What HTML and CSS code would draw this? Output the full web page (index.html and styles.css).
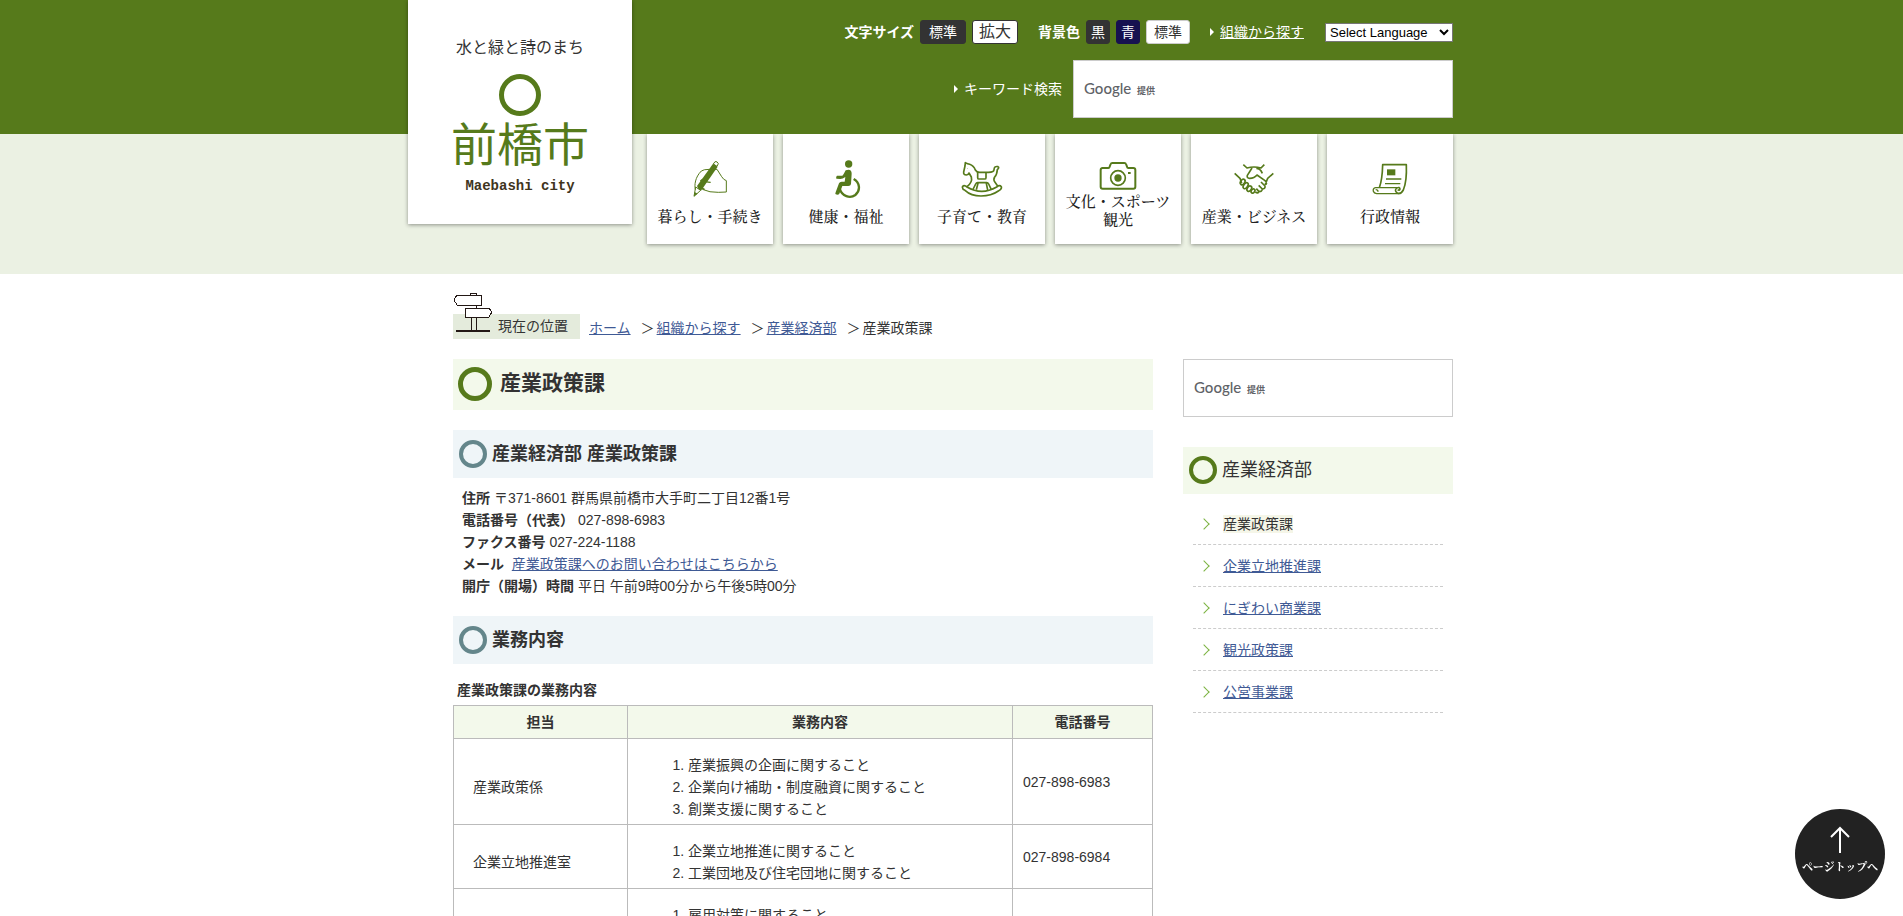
FILE: index.html
```html
<!DOCTYPE html>
<html lang="ja">
<head>
    <meta charset="UTF-8">
    <meta name="viewport" content="width=device-width, initial-scale=1.0">
    <title>産業政策課 - 前橋市</title>
    <link rel="stylesheet" href="styles.css">
</head>
<body>
    <header class="header">
        <div class="container header-inner">
            <a href="#" class="logo">
                <span class="logo-copy">水と緑と詩のまち</span>
                <span class="logo-ring"></span>
                <span class="logo-name">前橋市</span>
                <span class="logo-roman">Maebashi city</span>
            </a>
            <div class="header-right">
                <div class="tools">
                    <div class="tool-group">
                        <strong>文字サイズ</strong>
                        <button type="button" class="btn-dark">標準</button>
                        <button type="button" class="btn-large">拡大</button>
                    </div>
                    <div class="tool-group color-group">
                        <strong>背景色</strong>
                        <button type="button" class="btn-dark">黒</button>
                        <button type="button" class="btn-blue">青</button>
                        <button type="button" class="btn-white">標準</button>
                    </div>
                    <div class="arrow"><a href="#">組織から探す</a></div>
                    <select class="language" aria-label="Select Language">
                        <option>Select Language</option>
                    </select>
                </div>
                <form class="search-row">
                    <label for="keyword" class="arrow">キーワード検索</label>
                    <div class="search-box">
                        <input id="keyword" type="text">
                        <span class="brand">Google <small>提供</small></span>
                    </div>
                </form>
                <nav class="global-nav">
                    <a href="#">
                        <svg viewBox="0 0 126 120" fill="none">
                            <path d="M19 92C16 78 18 55 37 36q6-5 25-5M78 31h6l14 22q6 10 14 12v34l-24 1q-26 1-48-9" stroke-width="3"/>
                            <path d="M34 66l7-5q8 9 24 9M41 61l-8 14q4 14 14 16" stroke-width="4"/>
                            <path class="solid" d="M72 14l14 9-50 72-8-6-4-8z"/>
                            <path d="M78 8q7-2 10 6l-4 8-11-7z" stroke-width="3"/>
                            <path d="M20 84l-5 28 20-18z" stroke-width="3"/>
                            <path class="solid" d="M17 99l-2 13 11-8z"/>
                        </svg>
                        <span>暮らし・手続き</span>
                    </a>
                    <a href="#">
                        <svg viewBox="0 0 126 120" fill="none">
                            <circle class="solid" cx="71" cy="15" r="11"/>
                            <path class="solid" d="M62 34q18-6 18 10l-2 31q-1 6-8 6H52l-9 23q-4 6-12 1 0-2 1-5l10-27q2-5 8-5h9l2-14q-8 6-15 6l-12-1q-2-6 2-9h16q2 0 10-16z"/>
                            <path d="M86 60c18 10 22 34 5 48-16 12-40 4-47-19" stroke-width="7"/>
                        </svg>
                        <span>健康・福祉</span>
                    </a>
                    <a href="#">
                        <svg viewBox="0 0 126 120" fill="none" stroke-width="5">
                            <path d="M12 94Q2 90 5 82q5-5 13 2 44 26 89 0 9-7 14-1 2 8-9 13Q91 111 60 111q-30 0-48-17z"/>
                            <path d="M18 83q17-13 13-29l-7-12q-1 5-8 6-9 0-8-9l4-18 1-10q7 3 13 5 12 4 17 17 4 7 13 7h26q17-1 17-8 1-12 12-9 5 2-2 9-1 15-8 22-5 8 1 16l8 11"/>
                            <path d="M50 40v16q0 4 4 4h17q4 0 4-4V40M35 93l9-18q2-4 6-4h27q4 0 6 4l8 17M51 73l-5 19M76 73l4 20"/>
                            <circle class="solid" cx="19" cy="28" r="1"/>
                        </svg>
                        <span>子育て・教育</span>
                    </a>
                    <a href="#" class="two-lines">
                        <svg viewBox="0 0 126 120" fill="none" stroke-width="6">
                            <path d="M15 54h19q3 0 4-4l3-8q1-3 5-3h36q4 0 5 3l3 8q1 4 4 4h15q6 0 6 6v50q0 6-6 6H17q-6 0-6-6V60q0-6 6-6z"/>
                            <circle cx="63" cy="84" r="22" stroke-width="5"/>
                            <circle class="solid" cx="63" cy="84" r="11"/>
                            <path d="M93 69h8"/>
                        </svg>
                        <span>文化・スポーツ<br>観光</span>
                    </a>
                    <a href="#">
                        <svg viewBox="0 0 126 120" fill="none" stroke-width="5">
                            <path d="M31 17l11 10q21-6 42 0l10-10M57 27L43 49q-2 8 7 9 14 0 22-10l23 16q8 6 4 13M70 28q12 0 18 15M5 43l16 15 5 15M121 43l-17 15-8 20"/>
                            <ellipse cx="29" cy="69" rx="6" ry="9" transform="rotate(35 29 69)"/>
                            <ellipse cx="38" cy="80" rx="6" ry="10" transform="rotate(35 38 80)"/>
                            <ellipse cx="49" cy="89" rx="6" ry="9" transform="rotate(35 49 89)"/>
                            <ellipse cx="60" cy="96" rx="5" ry="7" transform="rotate(35 60 96)"/>
                            <path d="M67 99q8 6 11-1l-8-9M78 97q9 2 10-7L77 79M88 90q9 0 8-9L84 69"/>
                        </svg>
                        <span>産業・ビジネス</span>
                    </a>
                    <a href="#">
                        <svg viewBox="0 0 126 120" fill="none" stroke-width="5">
                            <path d="M31 86q9-25 10-69h71q2 49-9 76-8 14-18 9-10-7-2-15 9-4 10 3-2 6-7 2"/>
                            <path d="M84 86H20q-9 2-7 11 2 6 10 7h68M20 92q7 0 7 6" stroke-width="4"/>
                            <path class="solid" d="M54 31h25v18H54z"/>
                            <path d="M51 60h46M48 74h46" stroke-width="4"/>
                        </svg>
                        <span>行政情報</span>
                    </a>
                </nav>
            </div>
        </div>
    </header>

    <div class="container">
        <div class="breadcrumb">
            <div class="here">
                <svg class="signpost" viewBox="0 0 40 42" fill="#fff" stroke="#231815" shape-rendering="crispEdges">
                    <path d="M17 3V1h6v2M17 13h6v3M18 25v14M23 25v14"/>
                    <path d="M4 3h24v10H4L1 8zM12 16h24l3 4-3 5H12z"/>
                    <path d="M3 39h34" stroke-width="2"/>
                </svg>
                現在の位置
            </div>
            <ul>
                <li><a href="#">ホーム</a></li>
                <li><a href="#">組織から探す</a></li>
                <li><a href="#">産業経済部</a></li>
                <li>産業政策課</li>
            </ul>
        </div>

        <div class="columns">
            <main class="main">
                <h1>産業政策課</h1>
                <h2>産業経済部 産業政策課</h2>
                <div class="address">
                    <p><strong>住所</strong> 〒371-8601 群馬県前橋市大手町二丁目12番1号</p>
                    <p><strong>電話番号（代表）</strong> 027-898-6983</p>
                    <p><strong>ファクス番号</strong> 027-224-1188</p>
                    <p><strong>メール</strong>&nbsp; <a href="#">産業政策課へのお問い合わせはこちらから</a></p>
                    <p><strong>開庁（開場）時間</strong> 平日 午前9時00分から午後5時00分</p>
                </div>
                <h2>業務内容</h2>
                <table class="duties">
                    <caption>産業政策課の業務内容</caption>
                    <thead>
                        <tr>
                            <th class="col-name">担当</th>
                            <th>業務内容</th>
                            <th class="col-tel">電話番号</th>
                        </tr>
                    </thead>
                    <tbody>
                        <tr>
                            <td class="name">産業政策係</td>
                            <td>
                                <ol>
                                    <li>産業振興の企画に関すること</li>
                                    <li>企業向け補助・制度融資に関すること</li>
                                    <li>創業支援に関すること</li>
                                </ol>
                            </td>
                            <td class="tel">027-898-6983</td>
                        </tr>
                        <tr>
                            <td class="name">企業立地推進室</td>
                            <td>
                                <ol>
                                    <li>企業立地推進に関すること</li>
                                    <li>工業団地及び住宅団地に関すること</li>
                                </ol>
                            </td>
                            <td class="tel">027-898-6984</td>
                        </tr>
                        <tr>
                            <td class="name"></td>
                            <td>
                                <ol>
                                    <li>雇用対策に関すること</li>
                                </ol>
                            </td>
                            <td class="tel"></td>
                        </tr>
                    </tbody>
                </table>
            </main>

            <aside class="side">
                <form class="search-box">
                    <input type="text" aria-label="サイト内検索">
                    <span class="brand">Google <small>提供</small></span>
                </form>
                <h2 class="side-title">産業経済部</h2>
                <ul class="side-list">
                    <li><span class="current">産業政策課</span></li>
                    <li><a href="#">企業立地推進課</a></li>
                    <li><a href="#">にぎわい商業課</a></li>
                    <li><a href="#">観光政策課</a></li>
                    <li><a href="#">公営事業課</a></li>
                </ul>
            </aside>
        </div>
    </div>

    <a href="#" class="page-top">
        <svg viewBox="0 0 20 27" fill="none" stroke="#fff" stroke-width="2">
            <path d="M10 27V2M1 11l9-9 9 9"/>
        </svg>
        <span>ページトップへ</span>
    </a>
</body>
</html>
```

FILE: styles.css
```css
* {
    box-sizing: border-box;
}
body {
    margin: 0;
    color: #333;
    background-color: #fff;
    font-family: "Liberation Sans", "Noto Sans CJK JP", sans-serif;
    font-size: 14px;
    line-height: 22px;
}
a {
    color: #3f5a95;
}
ul, ol, p {
    margin: 0;
    padding: 0;
}
ul {
    list-style: none;
}
.container {
    max-width: 1003px;
    margin: 0 auto;
    padding-left: 3px;
}

/* Header */
.header {
    background: linear-gradient(#567a1b 134px, #ebf1e3 134px);
    padding-bottom: 30px;
}
.header-inner {
    display: flex;
    align-items: flex-start;
}
.logo {
    flex: none;
    width: 224px;
    height: 224px;
    margin-left: -45px;
    padding-top: 36px;
    background-color: #fff;
    box-shadow: 0 1px 4px rgba(0, 0, 0, 0.4);
    display: flex;
    flex-direction: column;
    align-items: center;
    text-decoration: none;
}
.logo-copy {
    color: #333;
    font-size: 16px;
    line-height: 24px;
}
.logo-ring {
    width: 42px;
    height: 42px;
    margin-top: 14px;
    border: 5px solid #567a1b;
    border-radius: 50%;
}
.logo-name {
    color: #567a1b;
    font-size: 46px;
    line-height: 58px;
}
.logo-roman {
    color: #40341c;
    font-family: "Liberation Mono", monospace;
    font-weight: bold;
    line-height: 24px;
}
.header-right {
    flex: 1;
    margin-left: 15px;
    padding-top: 20px;
}
.tools {
    display: flex;
    justify-content: flex-end;
    align-items: center;
    height: 24px;
    color: #fff;
}
.tools a {
    color: #fff;
}
.tool-group {
    display: flex;
    align-items: center;
    gap: 6px;
    margin-right: 20px;
}
.tool-group button {
    height: 24px;
    padding: 0 8px;
    border: 1px solid #333;
    border-radius: 3px;
    font-family: inherit;
    font-size: 14px;
    line-height: 20px;
}
.color-group button {
    padding: 0 4px;
}
.tool-group .btn-dark {
    background-color: #333;
    color: #fff;
}
.tool-group .btn-large {
    padding: 0 6px;
    background-color: #fff;
    color: #333;
    font-size: 16px;
}
.tool-group .btn-blue {
    background-color: #171150;
    border-color: #171150;
    color: #fff;
}
.tool-group .btn-white {
    padding: 0 7px;
    background-color: #fff;
    border-color: #ccc;
    color: #333;
}
.arrow {
    display: flex;
    align-items: center;
    gap: 6px;
    color: #fff;
}
.arrow::before {
    content: "";
    border: 4px solid transparent;
    border-left-color: #fff;
    border-right-width: 0;
}
.language {
    width: 128px;
    height: 19px;
    margin-left: 21px;
    padding: 0;
    border: 1px solid #767676;
    background-color: #fff;
    color: #000;
    font-family: "Liberation Sans", sans-serif;
    font-size: 13px;
}
.search-row {
    display: flex;
    justify-content: flex-end;
    align-items: center;
    gap: 11px;
    margin: 16px 0;
}
.search-row .search-box {
    width: 380px;
}
.search-box {
    position: relative;
    height: 58px;
}
.search-box input {
    display: block;
    width: 100%;
    height: 100%;
    padding: 0 10px;
    border: 1px solid #ccc;
    background-color: #fff;
    font-size: 14px;
}
.search-box .brand {
    position: absolute;
    top: 17px;
    left: 11px;
    color: #5f6368;
    font-family: Lato, "Noto Sans CJK JP", sans-serif;
    font-size: 15px;
    font-weight: 500;
    pointer-events: none;
}
.brand small {
    margin-left: 2px;
    font-size: 9px;
    font-weight: bold;
}

/* Global navigation */
.global-nav {
    display: grid;
    grid-template-columns: repeat(6, 1fr);
    gap: 10px;
}
.global-nav a {
    height: 110px;
    padding-bottom: 18px;
    background-color: #fff;
    box-shadow: 0 1px 4px rgba(0, 0, 0, 0.4);
    clip-path: inset(0 -4px -5px -4px);
    display: flex;
    flex-direction: column;
    justify-content: flex-end;
    align-items: center;
    gap: 9px;
    color: #222;
    font-family: "Liberation Serif", "Noto Serif CJK JP", "Noto Sans CJK JP", serif;
    font-size: 15px;
    font-weight: 500;
    line-height: 18px;
    text-align: center;
    text-decoration: none;
}
.global-nav .two-lines {
    gap: 3px;
    padding-bottom: 15px;
}
.global-nav svg {
    width: 42px;
    height: 40px;
    stroke: #567a1b;
    stroke-linejoin: round;
}
.global-nav .solid {
    fill: #567a1b;
    stroke: none;
}

/* Breadcrumb */
.breadcrumb {
    display: flex;
    align-items: flex-end;
    gap: 9px;
    margin-top: 40px;
}
.here {
    position: relative;
    width: 127px;
    height: 25px;
    padding-left: 45px;
    background-color: #e4ebdc;
    line-height: 25px;
}
.signpost {
    position: absolute;
    left: 0;
    bottom: 5px;
    width: 40px;
    height: 42px;
}
.breadcrumb ul {
    display: flex;
}
.breadcrumb li + li::before {
    content: "＞";
    margin-right: 2px;
    margin-left: 10px;
}

/* Columns */
.columns {
    display: flex;
    justify-content: space-between;
    align-items: flex-start;
    margin-top: 20px;
}
.main {
    width: 70%;
}
.side {
    width: 27%;
}
h1, h2 {
    display: flex;
    align-items: center;
    margin: 0;
}
h1::before, h2::before {
    content: "";
    box-sizing: border-box;
    flex: none;
    border-style: solid;
    border-radius: 50%;
}
h1 {
    align-items: flex-start;
    gap: 8px;
    min-height: 51px;
    padding: 8px 5px;
    background-color: #f3f9eb;
    font-size: 21px;
    line-height: 31px;
}
h1::before {
    width: 34px;
    height: 34px;
    border-width: 5px;
    border-color: #567a1b;
}
h2 {
    gap: 5px;
    margin-top: 20px;
    padding: 10px 6px;
    background-color: #eff5f8;
    font-size: 18px;
    line-height: 28px;
}
h2::before {
    width: 28px;
    height: 28px;
    border-width: 4px;
    border-color: #64868b;
}
.address {
    padding: 9px 9px 0;
}
.address + h2 {
    margin-top: 19px;
}

/* Table of duties */
.duties {
    width: 100%;
    margin-top: 15px;
    border-collapse: collapse;
    table-layout: fixed;
}
.duties caption {
    padding: 0 4px 4px;
    font-weight: bold;
    text-align: left;
}
.duties th,
.duties td {
    border: 1px solid #bbb;
}
.duties th {
    height: 33px;
    padding: 0;
    background-color: #f3f9eb;
}
.duties .col-name {
    width: 174px;
}
.duties .col-tel {
    width: 140px;
}
.duties td {
    padding: 15px 10px 4px;
}
.duties .name {
    padding: 14px 10px 4px 19px;
}
.duties .tel {
    padding: 4px 10px;
}
.duties ol {
    padding-left: 50px;
}

/* Side menu */
.side-title {
    margin-top: 30px;
    padding: 9px 6px 10px;
    background-color: #f3f9eb;
    font-weight: normal;
}
.side-title::before {
    border-color: #567a1b;
}
.side-list {
    margin: 9px 10px 0;
}
.side-list li {
    display: flex;
    align-items: center;
    height: 42px;
    padding-left: 7px;
    border-bottom: 1px dashed #ccc;
}
.side-list li::before {
    content: "";
    width: 7px;
    height: 7px;
    margin-right: 15px;
    border: solid #7cb342;
    border-width: 1px 1px 0 0;
    transform: rotate(45deg);
}
.side-list .current {
    background-color: #f5f6e8;
    line-height: 18px;
}

/* Back to top */
.page-top {
    position: fixed;
    right: 18px;
    bottom: 17px;
    width: 90px;
    height: 90px;
    padding-top: 17px;
    border-radius: 50%;
    background-color: #222;
    display: flex;
    flex-direction: column;
    align-items: center;
    gap: 5px;
    color: #fff;
    font-family: "Noto Serif CJK JP", "Noto Sans CJK JP", serif;
    font-size: 11px;
    font-weight: bold;
    line-height: 16px;
    text-decoration: none;
}
.page-top svg {
    width: 20px;
    height: 27px;
}
```
